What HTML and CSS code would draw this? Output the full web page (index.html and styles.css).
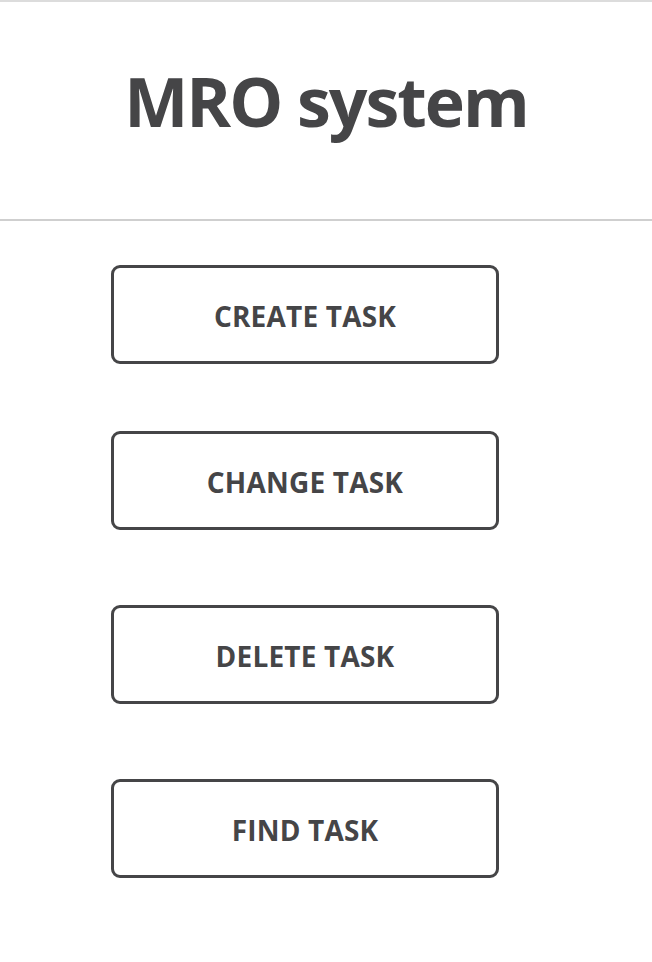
FILE: index.html
```html
<!DOCTYPE html>
<html>
<head>
<meta charset="utf-8">
<link rel="stylesheet" href="styles.css">
</head>
<body>
<header class="header">
  <h1 class="title">MRO system</h1>
</header>
<main class="menu">
  <button class="task-btn task-btn--first">CREATE TASK</button>
  <button class="task-btn">CHANGE TASK</button>
  <button class="task-btn">DELETE TASK</button>
  <button class="task-btn">FIND TASK</button>
</main>
</body>
</html>
```
FILE: styles.css
```css
html, body {
  margin: 0;
  padding: 0;
  background: #fff;
}
body {
  font-family: "Open Sans", "Lato", sans-serif;
  color: #454547;
}
.header {
  border-top: 2px solid #dcdcdc;
  border-bottom: 2px solid #cfcfcf;
  height: 217px;
  display: flex;
  align-items: center;
  justify-content: center;
}
.title {
  margin: 0;
  font-family: "Open Sans", "Lato", sans-serif;
  font-size: 68px;
  font-weight: 700;
  letter-spacing: -2px;
  line-height: 1;
  transform: translateY(-10px);
}
.menu {
  display: flex;
  flex-direction: column;
  align-items: flex-start;
  padding: 44px 0 0 111px;
  gap: 75px;
}
.task-btn {
  box-sizing: border-box;
  width: 388px;
  height: 99px;
  border: 3px solid #454547;
  border-radius: 9px;
  background: #fff;
  color: #454547;
  font-family: "Open Sans", "Lato", sans-serif;
  font-weight: 700;
  font-size: 28px;
  letter-spacing: 0.2px;
  padding: 2px 0 0;
}
.task-btn--first {
  margin-bottom: -8px;
}
```
